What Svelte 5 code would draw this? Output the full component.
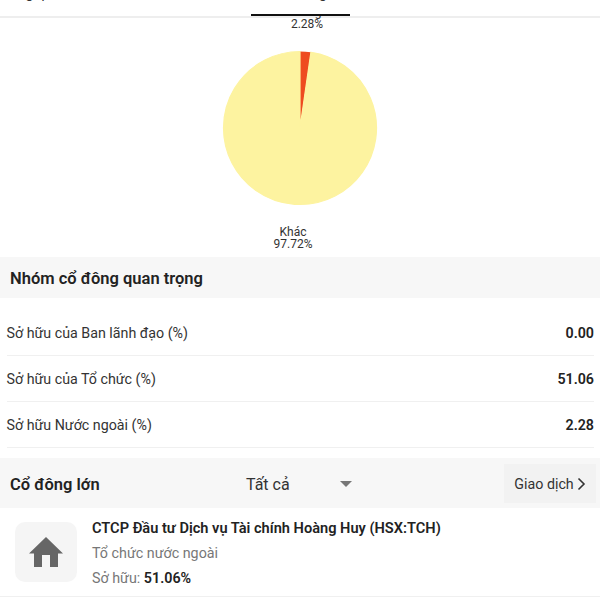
<script>
	const tabs = [
		{ label: 'Tổng quan', width: 70 },
		{ label: 'Tài chính', width: 181 },
		{ label: 'Cổ đông', width: 99, active: true },
		{ label: 'Tin tức', width: 125 },
		{ label: 'Hồ sơ', width: 125 }
	];

	const groups = [
		{ label: 'Sở hữu của Ban lãnh đạo (%)', value: '0.00' },
		{ label: 'Sở hữu của Tổ chức (%)', value: '51.06' },
		{ label: 'Sở hữu Nước ngoài (%)', value: '2.28' }
	];

	const cx = 100;
	const cy = 100;
	const r = 76.5;
	const foreignPct = 2.28;

	const point = (pct) => {
		const angle = (pct / 100) * Math.PI * 2;
		return `${cx + r * Math.sin(angle)} ${cy - r * Math.cos(angle)}`;
	};

	const foreignSlice = `M${cx} ${cy} L${point(0)} A${r} ${r} 0 0 1 ${point(foreignPct)} Z`;
	const otherSlice = `M${cx} ${cy} L${point(foreignPct)} A${r} ${r} 0 1 1 ${point(0)} Z`;
</script>

<div class="page">
	<nav class="tabs">
		{#each tabs as tab}
			<div class="tab" class:active={tab.active} style="width: {tab.width}px">
				<span>{tab.label}</span>
			</div>
		{/each}
	</nav>

	<section class="chart">
		<svg class="pie" viewBox="0 0 200 200" width="200" height="200">
			<path d={foreignSlice} fill="#ee4b20" />
			<path d={otherSlice} fill="#fdf3a0" stroke="#fdf3a0" stroke-width="1.2" />
		</svg>
		<div class="pie-label foreign">Nước ngoài<br />2.28%</div>
		<div class="pie-label other">Khác<br />97.72%</div>
	</section>

	<section class="heading">
		<h2>Nhóm cổ đông quan trọng</h2>
	</section>

	<div class="rows">
		{#each groups as row}
			<div class="row">
				<span>{row.label}</span>
				<b>{row.value}</b>
			</div>
		{/each}
	</div>

	<section class="heading holders">
		<h2>Cổ đông lớn</h2>
		<div class="filter">
			<span>Tất cả</span>
			<i class="caret"></i>
		</div>
		<div class="trade">
			<span>Giao dịch</span>
			<svg width="9" height="14" viewBox="0 0 9 14" fill="none" stroke="#333" stroke-width="1.6">
				<path d="M1.500 1.500 7 7l-5.500 5.500" />
			</svg>
		</div>
	</section>

	<article class="holder">
		<div class="avatar">
			<svg width="34" height="30" viewBox="0 0 34 30">
				<path fill="#666" d="M17 0 34 16.500H29V30H21V18H13V30H5V16.500H0Z" />
			</svg>
		</div>
		<div class="info">
			<div class="name">CTCP Đầu tư Dịch vụ Tài chính Hoàng Huy (HSX:TCH)</div>
			<div class="muted">Tổ chức nước ngoài</div>
			<div class="muted">Sở hữu: <b>51.06%</b></div>
		</div>
	</article>
</div>

<style>
	:global(body) {
		background: #fff;
	}

	.page {
		position: relative;
		width: 600px;
		height: 600px;
		overflow: hidden;
		font-family: Roboto, 'Noto Sans', sans-serif;
		color: #222;
		background: #fff;
	}

	/* sticky tab bar, scrolled so only the descenders of its labels still show */
	.tabs {
		position: absolute;
		top: 0;
		left: 0;
		right: 0;
		z-index: 1;
		display: flex;
		height: 16px;
		overflow: hidden;
		background: #fff;
	}

	.tab {
		flex: none;
		height: 16px;
		box-sizing: border-box;
		text-align: center;
		font-size: 14px;
		line-height: 18px;
		color: #333;
	}

	.tab span {
		display: block;
		margin-top: -16px;
	}

	.tab.active {
		border-bottom: 2px solid #111;
	}

	.chart {
		position: relative;
		height: 257px;
	}

	.chart::before {
		content: '';
		position: absolute;
		top: 16px;
		left: 0;
		right: 0;
		height: 2px;
		background: #eeeeee;
	}

	.pie {
		position: absolute;
		left: 200px;
		top: 28px;
	}

	.pie-label {
		position: absolute;
		width: 100px;
		text-align: center;
		font-size: 12px;
		line-height: 12px;
		color: #333;
	}

	.foreign {
		left: 257px;
		top: 6px;
	}

	.other {
		left: 243px;
		top: 226px;
	}

	.heading {
		display: flex;
		align-items: center;
		height: 41px;
		padding-left: 10px;
		background: #f7f7f7;
	}

	.heading h2 {
		margin: 0;
		padding-top: 1px;
		font-size: 16.500px;
		font-weight: 600;
		color: #222;
	}

	.rows {
		margin-top: 12px;
		padding: 0 6px 0 6.500px;
	}

	.row {
		display: flex;
		justify-content: space-between;
		align-items: center;
		height: 46px;
		box-sizing: border-box;
		border-bottom: 1px solid #f0f0f0;
		font-size: 14.250px;
		color: #333;
	}

	.row b {
		font-weight: 600;
		color: #222;
	}

	.holders {
		margin-top: 10px;
		height: 50px;
		padding-right: 4px;
	}

	.holders h2 {
		width: 236px;
		padding-top: 2px;
	}

	.filter {
		display: flex;
		align-items: center;
		width: 258px;
		padding-top: 2px;
		font-size: 16px;
		color: #333;
	}

	.caret {
		margin-left: 50px;
		border-left: 6px solid transparent;
		border-right: 6px solid transparent;
		border-top: 6px solid #777;
	}

	.trade {
		display: flex;
		align-items: center;
		justify-content: center;
		gap: 3px;
		width: 92px;
		height: 39px;
		padding-top: 1px;
		box-sizing: border-box;
		background: #f2f2f2;
		font-size: 14.250px;
		color: #333;
	}

	.holder {
		display: flex;
		gap: 15px;
		height: 89px;
		padding: 14px 0 0 15px;
		box-sizing: border-box;
		border-bottom: 1px solid #f0f0f0;
	}

	.avatar {
		display: flex;
		align-items: center;
		justify-content: center;
		width: 62px;
		height: 60px;
		border-radius: 10px;
		background: #f5f5f5;
	}

	.info {
		display: flex;
		flex-direction: column;
		gap: 9px;
		margin-top: -2px;
		font-size: 14.300px;
	}

	.name {
		font-size: 14.600px;
		font-weight: 600;
		line-height: 16px;
		color: #222;
	}

	.muted {
		line-height: 16px;
		color: #777;
	}

	.muted b {
		font-weight: 600;
		color: #222;
	}
</style>
